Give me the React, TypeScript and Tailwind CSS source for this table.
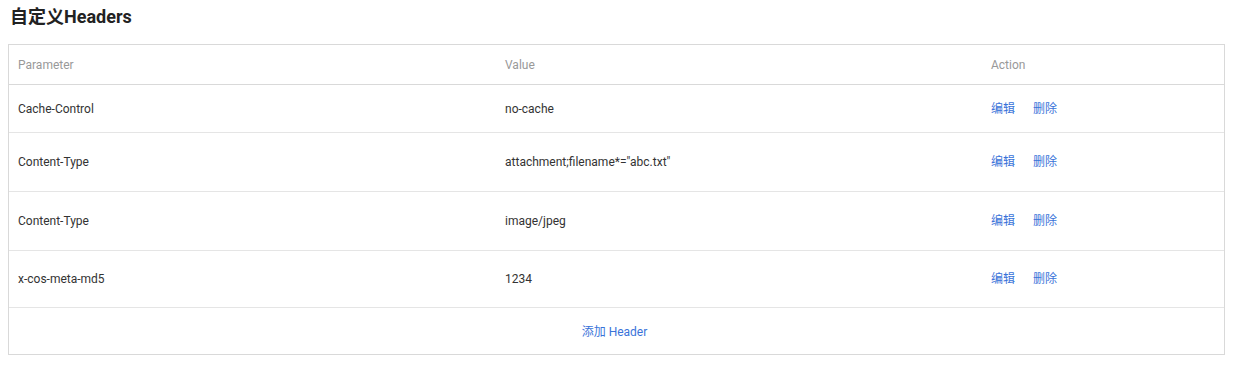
const rows = [
  { name: 'Cache-Control', value: 'no-cache', h: 'h-[48px]' },
  { name: 'Content-Type', value: 'attachment;filename*="abc.txt"', h: 'h-[59px]' },
  { name: 'Content-Type', value: 'image/jpeg', h: 'h-[59px]' },
  { name: 'x-cos-meta-md5', value: '1234', h: 'h-[57px]' },
]

export default function App() {
  return (
    <div
      className="bg-white w-[1235px] h-[369px] px-2 pt-[6px]"
      style={{ fontFamily: 'Roboto, "Noto Sans CJK SC", sans-serif' }}
    >
      <h2 className="text-[18px] leading-[22px] font-bold text-[#222] pl-[2px] mb-[16px]">
        自定义Headers
      </h2>

      <div className="w-[1217px] border border-[#d9d9d9] text-[12px]">
        <div className="grid grid-cols-[487px_486px_1fr] h-[40px] items-center border-b border-[#d9d9d9] text-[#999]">
          <div className="pl-[9px]">Parameter</div>
          <div className="pl-[9px]">Value</div>
          <div className="pl-[9px]">Action</div>
        </div>

        {rows.map((row, i) => (
          <div
            key={i}
            className={`grid grid-cols-[487px_486px_1fr] items-center border-b border-[#e5e5e5] text-[#333] ${row.h}`}
          >
            <div className="pl-[9px]">{row.name}</div>
            <div className="pl-[9px]">{row.value}</div>
            <div className="pl-[9px] flex gap-[18px] text-[#3a73d9]">
              <a className="cursor-pointer">编辑</a>
              <a className="cursor-pointer">删除</a>
            </div>
          </div>
        ))}

        <div className="h-[46px] flex items-center justify-center pt-[1px] pr-[4px] text-[#3a73d9]">
          <a className="cursor-pointer">添加 Header</a>
        </div>
      </div>
    </div>
  )
}
